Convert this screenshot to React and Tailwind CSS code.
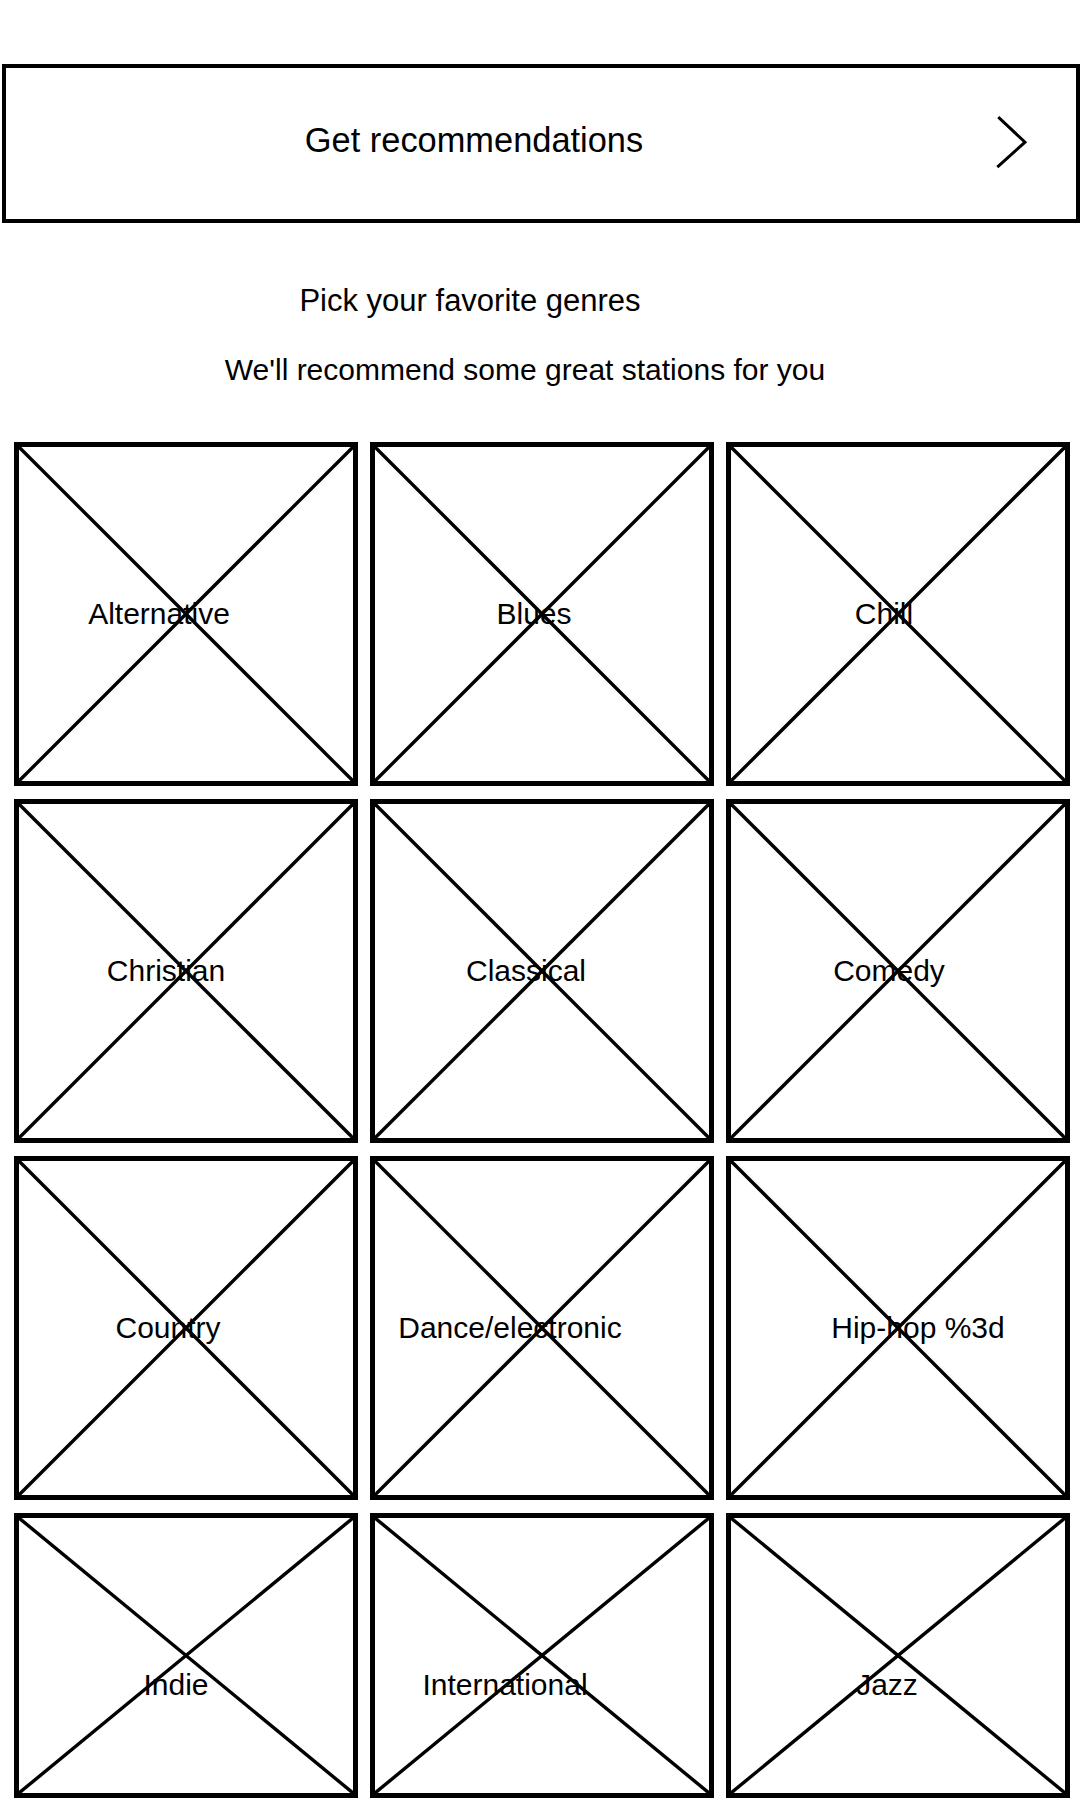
import React from "react";

const genres = [
  { name: "Alternative", pos: "left-[145px]" },
  { name: "Blues", pos: "left-[164px]" },
  { name: "Chill", pos: "left-[158px]" },
  { name: "Christian", pos: "left-[152px]" },
  { name: "Classical", pos: "left-[156px]" },
  { name: "Comedy", pos: "left-[163px]" },
  { name: "Country", pos: "left-[154px]" },
  { name: "Dance/electronic", pos: "left-[140px]" },
  { name: "Hip-hop %3d", pos: "left-[192px]" },
  { name: "Indie", pos: "left-[162px]", last: true },
  { name: "International", pos: "left-[135px]", last: true },
  { name: "Jazz", pos: "left-[161px]", last: true },
];

function Placeholder() {
  return (
    <svg
      className="absolute inset-0 w-full h-full"
      viewBox="0 0 100 100"
      preserveAspectRatio="none"
    >
      <line x1="0" y1="0" x2="100" y2="100" stroke="black" strokeWidth="3.4" vectorEffect="non-scaling-stroke" />
      <line x1="100" y1="0" x2="0" y2="100" stroke="black" strokeWidth="3.4" vectorEffect="non-scaling-stroke" />
    </svg>
  );
}

function GenreCell({ name, pos, last }) {
  return (
    <div className="relative h-[344px]">
      <div className={(last ? "h-[285px]" : "h-full") + " border-[5px] border-black"}>
        <div className="relative w-full h-full">
          <Placeholder />
        </div>
      </div>
      <span
        className={
          "absolute top-[172px] -translate-x-1/2 -translate-y-1/2 whitespace-nowrap text-[30px] leading-none text-black " +
          pos
        }
      >
        {name}
      </span>
    </div>
  );
}

export default function App() {
  return (
    <div className="w-[1080px] h-[1800px] overflow-hidden bg-white text-black font-['Liberation_Sans',Arial,sans-serif]">
      <div className="mt-[64px] ml-[2px] h-[159px] border-4 border-black flex items-center">
        <div className="w-[936px] text-center mb-[7px] text-[34.4px] leading-none">
          Get recommendations
        </div>
        <svg className="ml-[53px] w-[34px] h-[56px]" viewBox="0 0 34 56" fill="none">
          <polyline points="3.3,1.2 30,26.2 2.3,51.2" stroke="black" strokeWidth="3" strokeLinejoin="miter" />
        </svg>
      </div>

      <div className="mt-[62px] flex justify-center pr-[140px] text-[31px] leading-none">
        Pick your favorite genres
      </div>
      <div className="mt-[39px] flex justify-center pr-[30px] text-[30px] leading-none">
        We'll recommend some great stations for you
      </div>

      <div className="mt-[57px] pl-[14px] grid grid-cols-[344px_344px_344px] gap-x-[12px] gap-y-[13px]">
        {genres.map((g) => (
          <GenreCell key={g.name} {...g} />
        ))}
      </div>
    </div>
  );
}
